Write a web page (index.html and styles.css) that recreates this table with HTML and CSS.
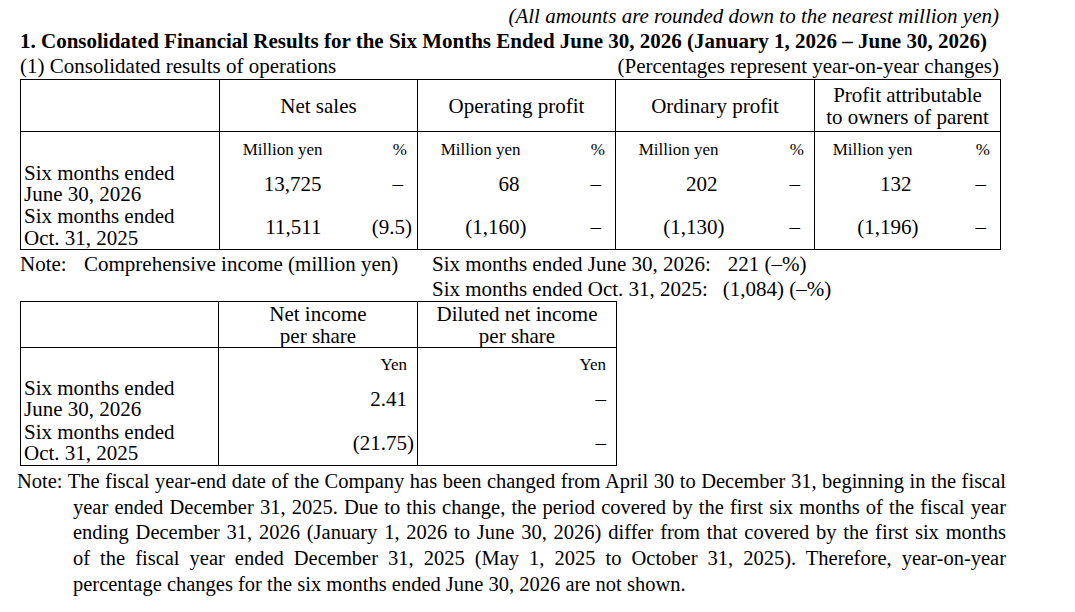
FILE: index.html
```html
<!DOCTYPE html>
<html lang="en">
<head>
<meta charset="utf-8">
<title>Consolidated Financial Results</title>
<link rel="stylesheet" href="styles.css">
</head>
<body>
<div class="page">
  <p class="unit-note">(All amounts are rounded down to the nearest million yen)</p>
  <h1 class="title">1. Consolidated Financial Results for the Six Months Ended June 30, 2026 (January 1, 2026 – June 30, 2026)</h1>
  <div class="subhead">
    <span>(1) Consolidated results of operations</span>
    <span>(Percentages represent year-on-year changes)</span>
  </div>

  <table class="results">
    <colgroup>
      <col class="c-label">
      <col class="c-amt"><col class="c-pct">
      <col class="c-amt"><col class="c-pct">
      <col class="c-amt"><col class="c-pct-w">
      <col class="c-amt-last"><col class="c-pct-last">
    </colgroup>
    <thead>
      <tr class="head-row">
        <th class="label"></th>
        <th colspan="2">Net sales</th>
        <th colspan="2">Operating profit</th>
        <th colspan="2">Ordinary profit</th>
        <th colspan="2">Profit attributable<br>to owners of parent</th>
      </tr>
    </thead>
    <tbody>
      <tr class="unit-row">
        <td class="label"></td>
        <td class="amt unit">Million yen</td><td class="pct unit">%</td>
        <td class="amt unit">Million yen</td><td class="pct unit">%</td>
        <td class="amt unit">Million yen</td><td class="pct unit">%</td>
        <td class="amt unit">Million yen</td><td class="pct unit">%</td>
      </tr>
      <tr class="data-row">
        <td class="label">Six months ended<br>June 30, 2026</td>
        <td class="amt">13,725</td><td class="pct">–</td>
        <td class="amt">68</td><td class="pct">–</td>
        <td class="amt">202</td><td class="pct">–</td>
        <td class="amt">132</td><td class="pct">–</td>
      </tr>
      <tr class="data-row">
        <td class="label">Six months ended<br>Oct. 31, 2025</td>
        <td class="amt">11,511</td><td class="pct neg">(9.5)</td>
        <td class="amt neg">(1,160)</td><td class="pct">–</td>
        <td class="amt neg">(1,130)</td><td class="pct">–</td>
        <td class="amt neg">(1,196)</td><td class="pct">–</td>
      </tr>
    </tbody>
  </table>

  <div class="comp-note">
    <p class="comp-left"><span class="note-tag">Note:</span>Comprehensive income (million yen)</p>
    <div class="comp-right">
      <span>Six months ended June 30, 2026:</span><span class="val first">221 (–%)</span>
      <span>Six months ended Oct. 31, 2025:</span><span class="val">(1,084) (–%)</span>
    </div>
  </div>

  <table class="eps">
    <colgroup>
      <col class="e-label"><col class="e-col"><col class="e-col">
    </colgroup>
    <thead>
      <tr class="head-row">
        <th class="label"></th>
        <th>Net income<br>per share</th>
        <th>Diluted net income<br>per share</th>
      </tr>
    </thead>
    <tbody>
      <tr class="unit-row">
        <td class="label"></td>
        <td class="amt unit">Yen</td>
        <td class="amt unit">Yen</td>
      </tr>
      <tr class="data-row">
        <td class="label">Six months ended<br>June 30, 2026</td>
        <td class="amt">2.41</td>
        <td class="amt dash">–</td>
      </tr>
      <tr class="data-row">
        <td class="label">Six months ended<br>Oct. 31, 2025</td>
        <td class="amt neg">(21.75)</td>
        <td class="amt dash">–</td>
      </tr>
    </tbody>
  </table>

  <p class="fy-note">
    <span class="ln first">Note: The fiscal year-end date of the Company has been changed from April 30 to December 31, beginning in the fiscal</span>
    <span class="ln">year ended December 31, 2025. Due to this change, the period covered by the first six months of the fiscal year</span>
    <span class="ln">ending December 31, 2026 (January 1, 2026 to June 30, 2026) differ from that covered by the first six months</span>
    <span class="ln">of the fiscal year ended December 31, 2025 (May 1, 2025 to October 31, 2025). Therefore, year-on-year</span>
    <span class="ln last">percentage changes for the six months ended June 30, 2026 are not shown.</span>
  </p>
</div>
</body>
</html>
```

FILE: styles.css
```css
html, body {
  margin: 0;
  padding: 0;
  background: #ffffff;
  color: #000000;
}

body {
  font-family: "Liberation Serif", "Times New Roman", serif;
  font-size: 21px;
  line-height: 25px;
}

.page {
  padding: 4px 0 0 20px;
  width: 981px;
}

.unit-note {
  margin: 0;
  text-align: right;
  font-style: italic;
  padding-right: 2px;
}

.title {
  margin: 0;
  font-size: 21px;
  line-height: 25px;
  font-weight: bold;
}

.subhead {
  display: flex;
  justify-content: space-between;
  padding-right: 2px;
}

/* ---------- tables ---------- */
table {
  border-collapse: collapse;
  table-layout: fixed;
  border: 1px solid #000;
}

th, td {
  padding: 0;
  border-left: 1px solid #000;
  border-right: 1px solid #000;
}

th {
  font-weight: normal;
  text-align: center;
  line-height: 22px;
  border-bottom: 1px solid #000;
}

.label {
  text-align: left;
  padding-left: 3px;
  line-height: 21.5px;
  vertical-align: top;
}

.results { width: 981px; }
.c-label { width: 199px; }
.c-amt { width: 111px; }
.c-pct { width: 87px; }
.c-pct-w { width: 88px; }
.c-amt-last { width: 106px; }
.c-pct-last { width: 80px; }

.results .head-row { height: 52px; }
.results .unit-row { height: 31px; }
.results .data-row { height: 43.5px; }

/* inner sub-columns share one bordered column */
.results td.amt { border-right: none; }
.results td.pct { border-left: none; }

.amt {
  text-align: right;
  padding-right: 9px;
  vertical-align: middle;
}
.amt.neg { padding-right: 2px; }

.pct {
  text-align: right;
  padding-right: 14px;
  vertical-align: middle;
}
.pct.neg { padding-right: 5px; }

.unit {
  font-size: 17px;
  line-height: 20px;
  vertical-align: bottom;
  padding-bottom: 3px;
}
.amt.unit { padding-right: 8px; }
.pct.unit { padding-right: 10px; }

/* ---------- comprehensive income note ---------- */
.comp-note {
  display: flex;
  margin-top: 2px;
  margin-bottom: -1px;
}
.comp-left {
  margin: 0;
  width: 412px;
}
.note-tag {
  display: inline-block;
  width: 64px;
}
.comp-right {
  display: grid;
  grid-template-columns: auto auto;
  column-gap: 12px;
  align-content: start;
}
.comp-right .val.first { padding-left: 5px; }

/* ---------- per share table ---------- */
.eps { width: 597px; }
.e-label { width: 198px; }
.e-col { width: 199px; }

.eps .head-row { height: 46px; }
.eps .unit-row { height: 30px; }
.eps .data-row { height: 44px; }

.eps .amt { padding-right: 10px; }
.eps .amt.neg { padding-right: 3px; }
.eps .amt.unit { padding-right: 10px; }
.eps .amt.dash { padding-right: 10px; }

/* ---------- fiscal year note ---------- */
.fy-note {
  margin: 3px 0 0 -3px;
  width: 933px;
  padding-left: 56px;
  font-size: 20.5px;
  line-height: 25.7px;
}
.fy-note .ln {
  display: block;
  text-align: justify;
  text-align-last: justify;
  white-space: nowrap;
}
.fy-note .ln.first { margin-left: -56px; }
.fy-note .ln.last { text-align-last: left; }
```
